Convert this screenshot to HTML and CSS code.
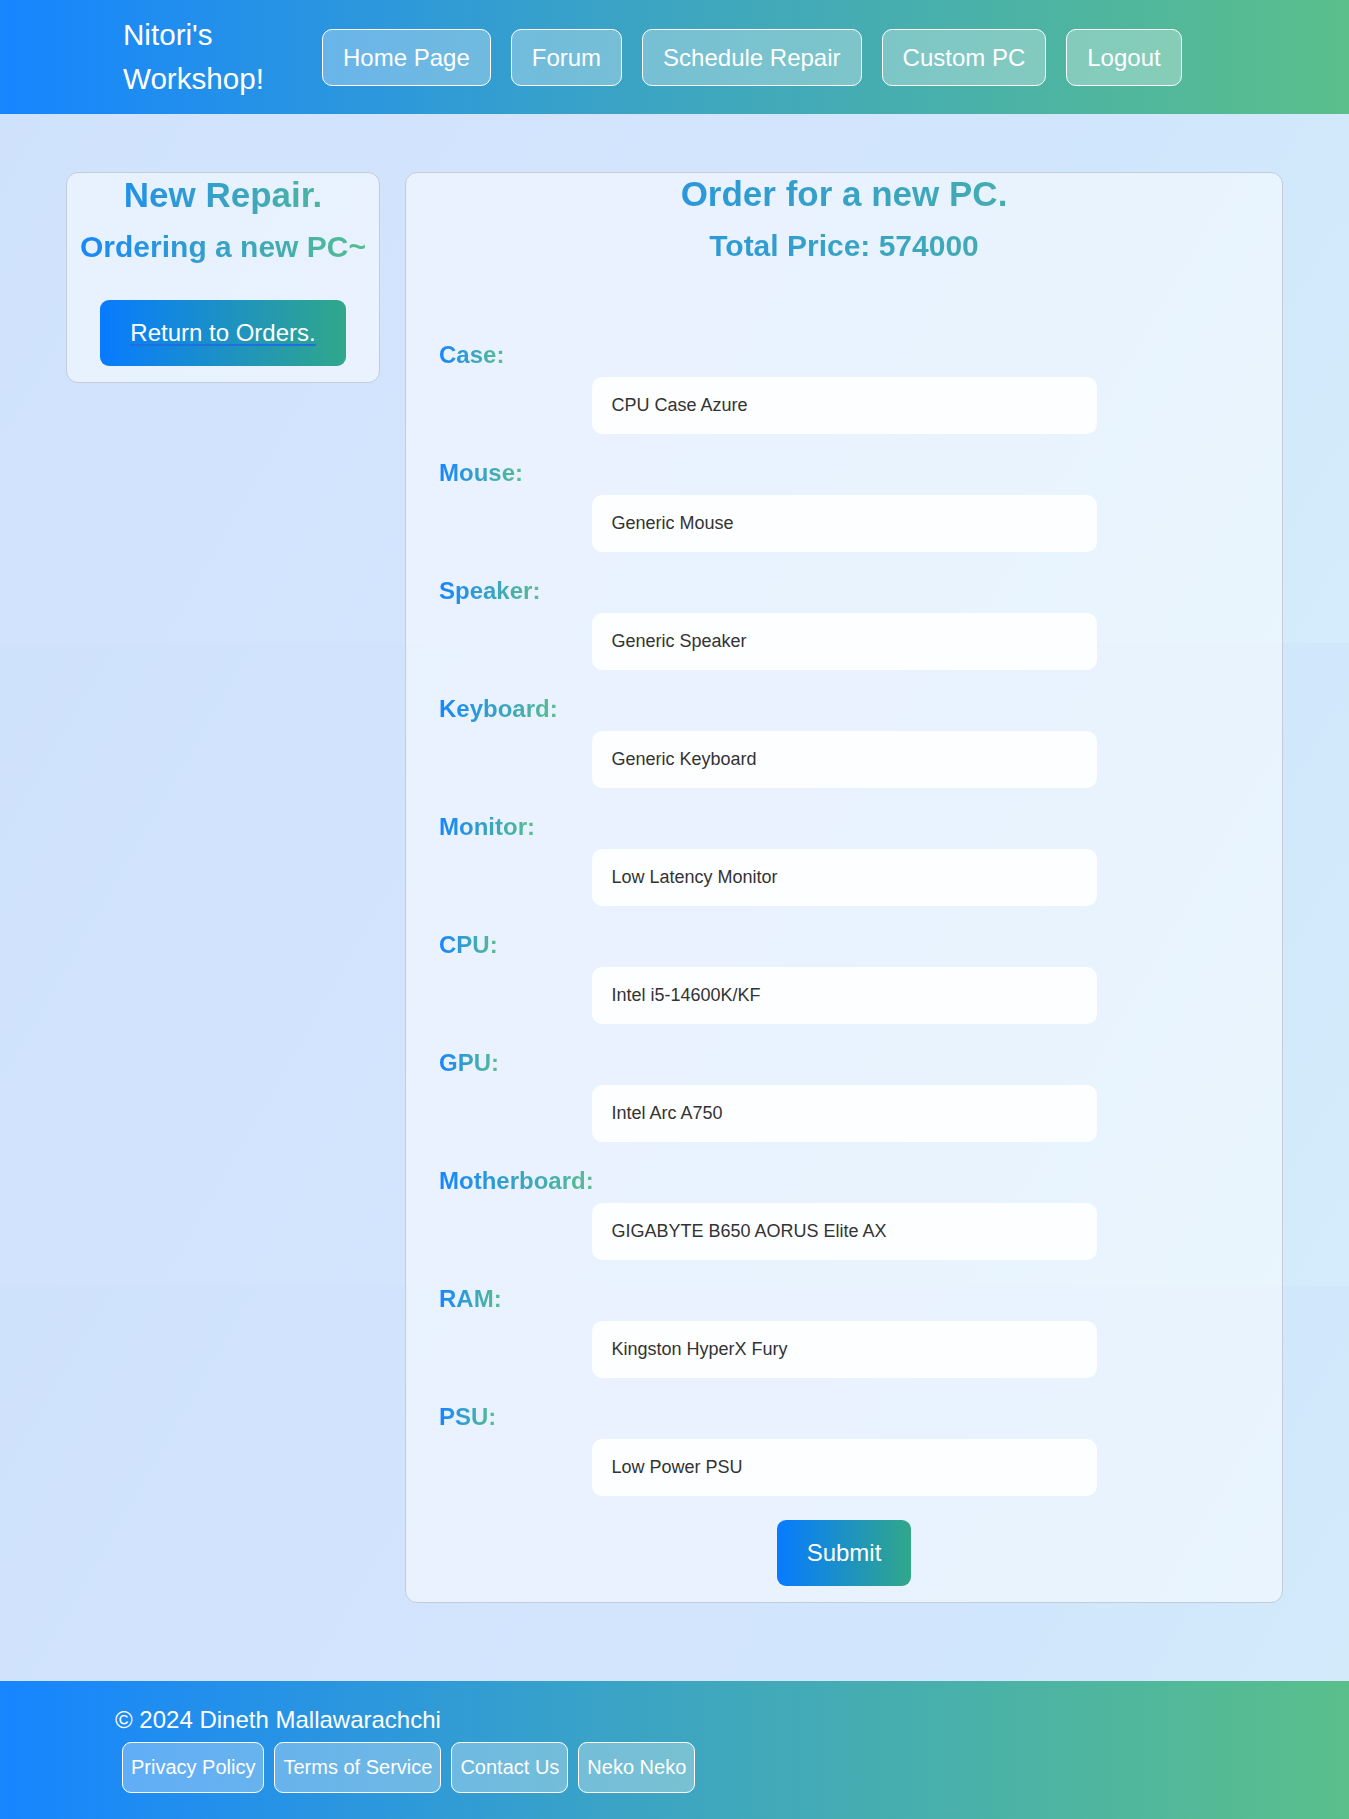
FILE: index.html
```html
<!DOCTYPE html>
<html lang="en">
<head>
<meta charset="utf-8">
<title>Nitori's Workshop - Custom PC</title>
<link rel="stylesheet" href="styles.css">
</head>
<body>
<header class="site-header">
  <div class="logo">Nitori's Workshop!</div>
  <nav class="nav">
    <a class="nav-btn" href="#">Home Page</a>
    <a class="nav-btn" href="#">Forum</a>
    <a class="nav-btn" href="#">Schedule Repair</a>
    <a class="nav-btn" href="#">Custom PC</a>
    <a class="nav-btn" href="#">Logout</a>
  </nav>
</header>

<main class="content">
  <aside class="card side-card">
    <h1 class="grad-title">New Repair.</h1>
    <h2 class="grad-sub">Ordering a new PC~</h2>
    <a class="grad-btn return-btn" href="#"><span class="u">Return to Orders.</span></a>
  </aside>

  <section class="card order-card">
    <h1 class="grad-title">Order for a new PC.</h1>
    <h2 class="grad-price">Total Price: 574000</h2>
    <form class="order-form">
      <div class="field"><label class="field-label">Case:</label><input class="field-input" type="text" value="CPU Case Azure"></div>
      <div class="field"><label class="field-label">Mouse:</label><input class="field-input" type="text" value="Generic Mouse"></div>
      <div class="field"><label class="field-label">Speaker:</label><input class="field-input" type="text" value="Generic Speaker"></div>
      <div class="field"><label class="field-label">Keyboard:</label><input class="field-input" type="text" value="Generic Keyboard"></div>
      <div class="field"><label class="field-label">Monitor:</label><input class="field-input" type="text" value="Low Latency Monitor"></div>
      <div class="field"><label class="field-label">CPU:</label><input class="field-input" type="text" value="Intel i5-14600K/KF"></div>
      <div class="field"><label class="field-label">GPU:</label><input class="field-input" type="text" value="Intel Arc A750"></div>
      <div class="field"><label class="field-label">Motherboard:</label><input class="field-input" type="text" value="GIGABYTE B650 AORUS Elite AX"></div>
      <div class="field"><label class="field-label">RAM:</label><input class="field-input" type="text" value="Kingston HyperX Fury"></div>
      <div class="field"><label class="field-label">PSU:</label><input class="field-input" type="text" value="Low Power PSU"></div>
      <button class="grad-btn submit-btn" type="button">Submit</button>
    </form>
  </section>
</main>

<footer class="site-footer">
  <p class="copy">© 2024 Dineth Mallawarachchi</p>
  <div class="footer-links">
    <a class="foot-btn" href="#">Privacy Policy</a>
    <a class="foot-btn" href="#">Terms of Service</a>
    <a class="foot-btn" href="#">Contact Us</a>
    <a class="foot-btn" href="#">Neko Neko</a>
  </div>
</footer>
</body>
</html>
```

FILE: styles.css
```css
* { box-sizing: border-box; }

html, body {
  margin: 0;
  padding: 0;
}

body {
  font-family: "Liberation Sans", Arial, sans-serif;
  background-color: #d2e6fc;
  background-image: linear-gradient(120deg, #cfe2fc 0%, #d3e5fd 45%, #d0e6fc 70%, #d4ecfb 100%);
  background-size: 100% 643px;
  background-repeat: repeat-y;
}

/* Header */
.site-header {
  height: 114px;
  display: flex;
  align-items: center;
  padding-left: 123px;
  background: linear-gradient(90deg, #1685ff 0%, #3aa3c6 45%, #5abf8b 100%);
  color: #fff;
}

.logo {
  width: 199px;
  font-size: 29.6px;
  line-height: 44px;
  color: #fff;
}

.nav {
  display: flex;
  gap: 20px;
}

.nav-btn {
  display: block;
  color: #fff;
  text-decoration: none;
  font-size: 24px;
  line-height: 27px;
  padding: 14px 20px;
  border: 1px solid #fff;
  border-radius: 10px;
  background: rgba(255, 255, 255, 0.3);
}

/* Main */
.content {
  width: 1217px;
  margin: 0 auto;
  padding: 58px 0 78px;
  display: flex;
  gap: 25px;
  align-items: flex-start;
}

.card {
  background: rgba(255, 255, 255, 0.5);
  border: 1px solid #c3ccd8;
  border-radius: 12px;
}

.side-card {
  width: 314px;
  flex: none;
  padding: 2px 0 15.5px;
  text-align: center;
}

.order-card {
  flex: 1;
  padding: 1px 33px 16px;
}

.grad-title,
.grad-sub,
.grad-price {
  margin: 0;
  font-weight: bold;
  text-align: center;
  white-space: nowrap;
  background: linear-gradient(90deg, #1685ff 0%, #5abf8b 100%);
  -webkit-background-clip: text;
  background-clip: text;
  color: transparent;
}

.grad-title {
  font-size: 35px;
  line-height: 40px;
}

.order-card .grad-title {
  margin: 0 -33px;
}

.grad-sub {
  font-size: 30px;
  line-height: 35px;
  margin-top: 13.5px;
}

.grad-price {
  font-size: 30px;
  line-height: 35px;
  margin: 13.5px -33px 0;
}

.grad-btn {
  display: block;
  color: #fff;
  font-family: "Liberation Sans", Arial, sans-serif;
  font-size: 24px;
  line-height: 28px;
  padding: 19px 0;
  border: none;
  border-radius: 9px;
  background: linear-gradient(90deg, #077bff 0%, #31a78a 100%);
  text-align: center;
  cursor: pointer;
}

.return-btn {
  margin: 36.5px auto 0;
  width: 246px;
  text-decoration: none;
}

.return-btn .u {
  text-decoration: underline;
  text-decoration-color: #1f6fe0;
  text-underline-offset: 3px;
}

/* Form */
.order-form {
  margin-top: 77px;
}

.field {
  margin-bottom: 24px;
}

.field-label {
  display: inline-block;
  font-size: 24px;
  line-height: 29px;
  font-weight: bold;
  background: linear-gradient(90deg, #1685ff 0%, #5abf8b 100%);
  -webkit-background-clip: text;
  background-clip: text;
  color: transparent;
}

.field-input {
  display: block;
  width: 505px;
  height: 57px;
  margin: 8px auto 0;
  padding: 0 20px;
  border: none;
  border-radius: 10px;
  background: #fdfeff;
  font-family: "Liberation Sans", Arial, sans-serif;
  font-size: 18px;
  color: #333;
  outline: none;
}

.submit-btn {
  width: 134px;
  height: 66px;
  margin: 0 auto;
}

/* Footer */
.site-footer {
  background: linear-gradient(90deg, #1685ff 0%, #3aa3c6 45%, #5abf8b 100%);
  color: #fff;
  padding: 25.5px 0 26px 115px;
}

.copy {
  margin: 0;
  font-size: 24px;
  line-height: 27px;
}

.footer-links {
  display: flex;
  gap: 10px;
  margin: 8.5px 0 0 7px;
}

.foot-btn {
  display: block;
  color: #fff;
  text-decoration: none;
  font-size: 20px;
  line-height: 23px;
  padding: 13px 8px;
  border: 1px solid #fff;
  border-radius: 9px;
  background: rgba(255, 255, 255, 0.3);
}
```
